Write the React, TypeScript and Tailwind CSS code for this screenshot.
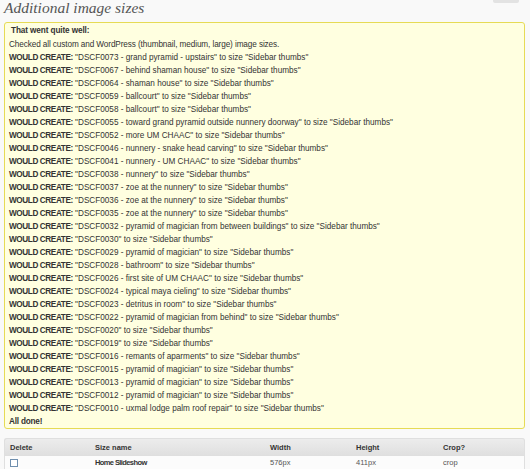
const items: string[] = [
  'DSCF0073 - grand pyramid - upstairs',
  'DSCF0067 - behind shaman house',
  'DSCF0064 - shaman house',
  'DSCF0059 - ballcourt',
  'DSCF0058 - ballcourt',
  'DSCF0055 - toward grand pyramid outside nunnery doorway',
  'DSCF0052 - more UM CHAAC',
  'DSCF0046 - nunnery - snake head carving',
  'DSCF0041 - nunnery - UM CHAAC',
  'DSCF0038 - nunnery',
  'DSCF0037 - zoe at the nunnery',
  'DSCF0036 - zoe at the nunnery',
  'DSCF0035 - zoe at the nunnery',
  'DSCF0032 - pyramid of magician from between buildings',
  'DSCF0030',
  'DSCF0029 - pyramid of magician',
  'DSCF0028 - bathroom',
  'DSCF0026 - first site of UM CHAAC',
  'DSCF0024 - typical maya cieling',
  'DSCF0023 - detritus in room',
  'DSCF0022 - pyramid of magician from behind',
  'DSCF0020',
  'DSCF0019',
  'DSCF0016 - remants of aparments',
  'DSCF0015 - pyramid of magician',
  'DSCF0013 - pyramid of magician',
  'DSCF0012 - pyramid of magician',
  'DSCF0010 - uxmal lodge palm roof repair',
];

const App = () => {
  return (
    <div className="min-h-[469px] bg-[#f9f9f9] pl-[4px] pr-[5px] text-[#333] font-['Liberation_Sans',Arial,sans-serif]">
      {/* page title + cut-off button */}
      <div className="flex items-start justify-between">
        <h2 className="text-[15.5px] leading-[15px] italic text-[#555] font-['Liberation_Serif',Georgia,serif]">
          Additional image sizes
        </h2>
        <div className="mr-[6px] h-[3px] w-[26px] rounded-b-[2px] bg-[#e3e3e3]" />
      </div>

      {/* result notice */}
      <div className="mt-[7px] rounded-[3px] border border-[#e6db55] bg-[#ffffe0] px-[4px] pt-[1px] text-[8.2px]">
        <p className="pl-[2px] leading-[14px] font-bold tracking-[-0.1px]">That went quite well:</p>
        <p className="leading-[13px] tracking-[-0.1px]">
          Checked all custom and WordPress (thumbnail, medium, large) image sizes.
        </p>
        {items.map((item, i) => (
          <p key={i} className="leading-[13px]">
            <strong className="tracking-[-0.4px]">WOULD CREATE:</strong> &quot;{item}&quot; to size &quot;Sidebar thumbs&quot;
          </p>
        ))}
        <p className="leading-[13px] font-bold tracking-[-0.2px]">All done!</p>
      </div>

      {/* sizes table */}
      <table className="mt-[9px] w-full table-fixed border-separate border-spacing-0 text-[7.5px]">
        <colgroup>
          <col className="w-[86px]" />
          <col className="w-[175px]" />
          <col className="w-[86px]" />
          <col className="w-[87px]" />
          <col />
        </colgroup>
        <thead>
          <tr className="bg-gradient-to-b from-[#ededed] to-[#dfdfdf] text-left font-bold text-[#333]">
            <th className="rounded-tl-[3px] border-y border-l border-[#dfdfdf] px-[5px] py-[2.5px] leading-[11px]">Delete</th>
            <th className="border-y border-[#dfdfdf] px-[5px] py-[2.5px] leading-[11px]">Size name</th>
            <th className="border-y border-[#dfdfdf] px-[5px] py-[2.5px] leading-[11px]">Width</th>
            <th className="border-y border-[#dfdfdf] px-[5px] py-[2.5px] leading-[11px]">Height</th>
            <th className="rounded-tr-[3px] border-y border-r border-[#dfdfdf] px-[5px] py-[2.5px] leading-[11px]">Crop?</th>
          </tr>
        </thead>
        <tbody>
          <tr className="bg-[#fcfcfc] text-[#555]">
            <td className="border-l border-[#dfdfdf] px-[5px] pt-[2px] pb-[4px] leading-[10px]">
              <span className="block h-[8px] w-[8px] border border-[#6f8fae] bg-white" />
            </td>
            <td className="px-[5px] pt-[2px] pb-[4px] leading-[10px] font-bold text-[#333] tracking-[-0.6px]">Home Slideshow</td>
            <td className="px-[5px] pt-[2px] pb-[4px] leading-[10px]">576px</td>
            <td className="px-[5px] pt-[2px] pb-[4px] leading-[10px]">411px</td>
            <td className="border-r border-[#dfdfdf] px-[5px] pt-[2px] pb-[4px] leading-[10px]">crop</td>
          </tr>
        </tbody>
      </table>
    </div>
  );
};

export default App;
